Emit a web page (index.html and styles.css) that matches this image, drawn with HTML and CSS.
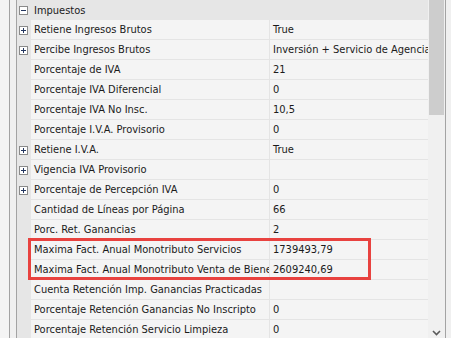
FILE: index.html
```html
<!DOCTYPE html>
<html lang="es">
<head>
    <meta charset="UTF-8">
    <title>Propiedades - Impuestos</title>
    <link rel="stylesheet" href="styles.css">
</head>
<body>

<div class="grid-frame">
    <div class="edge-left"></div>

    <div class="prop-grid">
        <div class="cat-row">
            <span class="toggle">
                <svg width="9" height="9" viewBox="0 0 9 9"><rect x="0.5" y="0.5" width="8" height="8" fill="#fff" stroke="#8a8a8a"/><path d="M2 4.5h5" stroke="#23355f"/></svg>
            </span>
            <span class="cat-name">Impuestos</span>
        </div>

        <div class="prop-row">
            <span class="toggle"><svg width="9" height="9" viewBox="0 0 9 9"><rect x="0.5" y="0.5" width="8" height="8" fill="#fff" stroke="#8a8a8a"/><path d="M2 4.5h5M4.5 2v5" stroke="#23355f"/></svg></span>
            <span class="prop-name">Retiene Ingresos Brutos</span>
            <span class="prop-value">True</span>
        </div>
        <div class="prop-row">
            <span class="toggle"><svg width="9" height="9" viewBox="0 0 9 9"><rect x="0.5" y="0.5" width="8" height="8" fill="#fff" stroke="#8a8a8a"/><path d="M2 4.5h5M4.5 2v5" stroke="#23355f"/></svg></span>
            <span class="prop-name">Percibe Ingresos Brutos</span>
            <span class="prop-value">Inversión + Servicio de Agencia</span>
        </div>
        <div class="prop-row">
            <span class="toggle"></span>
            <span class="prop-name">Porcentaje de IVA</span>
            <span class="prop-value">21</span>
        </div>
        <div class="prop-row">
            <span class="toggle"></span>
            <span class="prop-name">Porcentaje IVA Diferencial</span>
            <span class="prop-value">0</span>
        </div>
        <div class="prop-row">
            <span class="toggle"></span>
            <span class="prop-name">Porcentaje IVA No Insc.</span>
            <span class="prop-value">10,5</span>
        </div>
        <div class="prop-row">
            <span class="toggle"></span>
            <span class="prop-name">Porcentaje I.V.A. Provisorio</span>
            <span class="prop-value">0</span>
        </div>
        <div class="prop-row">
            <span class="toggle"><svg width="9" height="9" viewBox="0 0 9 9"><rect x="0.5" y="0.5" width="8" height="8" fill="#fff" stroke="#8a8a8a"/><path d="M2 4.5h5M4.5 2v5" stroke="#23355f"/></svg></span>
            <span class="prop-name">Retiene I.V.A.</span>
            <span class="prop-value">True</span>
        </div>
        <div class="prop-row">
            <span class="toggle"><svg width="9" height="9" viewBox="0 0 9 9"><rect x="0.5" y="0.5" width="8" height="8" fill="#fff" stroke="#8a8a8a"/><path d="M2 4.5h5M4.5 2v5" stroke="#23355f"/></svg></span>
            <span class="prop-name">Vigencia IVA Provisorio</span>
            <span class="prop-value"></span>
        </div>
        <div class="prop-row">
            <span class="toggle"><svg width="9" height="9" viewBox="0 0 9 9"><rect x="0.5" y="0.5" width="8" height="8" fill="#fff" stroke="#8a8a8a"/><path d="M2 4.5h5M4.5 2v5" stroke="#23355f"/></svg></span>
            <span class="prop-name">Porcentaje de Percepción IVA</span>
            <span class="prop-value">0</span>
        </div>
        <div class="prop-row">
            <span class="toggle"></span>
            <span class="prop-name">Cantidad de Líneas por Página</span>
            <span class="prop-value">66</span>
        </div>
        <div class="prop-row">
            <span class="toggle"></span>
            <span class="prop-name">Porc. Ret. Ganancias</span>
            <span class="prop-value">2</span>
        </div>
        <div class="prop-row">
            <span class="toggle"></span>
            <span class="prop-name">Maxima Fact. Anual Monotributo Servicios</span>
            <span class="prop-value">1739493,79</span>
        </div>
        <div class="prop-row">
            <span class="toggle"></span>
            <span class="prop-name">Maxima Fact. Anual Monotributo Venta de Bienes</span>
            <span class="prop-value">2609240,69</span>
        </div>
        <div class="prop-row">
            <span class="toggle"></span>
            <span class="prop-name">Cuenta Retención Imp. Ganancias Practicadas</span>
            <span class="prop-value"></span>
        </div>
        <div class="prop-row">
            <span class="toggle"></span>
            <span class="prop-name">Porcentaje Retención Ganancias No Inscripto</span>
            <span class="prop-value">0</span>
        </div>
        <div class="prop-row">
            <span class="toggle"></span>
            <span class="prop-name">Porcentaje Retención Servicio Limpieza</span>
            <span class="prop-value">0</span>
        </div>
    </div>

    <div class="scrollbar">
        <div class="scroll-thumb"></div>
        <svg class="scroll-down" width="9" height="6" viewBox="0 0 9 6"><path d="M1 1l3.5 3.5L8 1" fill="none" stroke="#5a5a5a" stroke-width="1.6"/></svg>
    </div>

    <div class="edge-right"></div>
</div>

<!-- Markierung der zwei Monotributo-Zeilen -->
<div class="highlight"></div>

</body>
</html>
```

FILE: styles.css
```css
body {
    margin: 0;
    background: #f4f4f4;
    font-family: 'DejaVu Sans', sans-serif;
    font-stretch: condensed;
    font-size: 11px;
    color: #1b1b1b;
}

.grid-frame {
    display: flex;
    height: 338px;
    overflow: hidden;
}

.edge-left {
    width: 6px;
    margin-left: 9px;
    background: #f0f0f0;
    border-left: 1px solid #a3a3a3;
    border-right: 1px solid #a3a3a3;
}

.prop-grid {
    width: 411px;
    background: #e6e6e6;
    border-right: 1px solid #f0f0f0;
}

.cat-row {
    display: flex;
    align-items: center;
    height: 20px;
}

.cat-name {
    padding-left: 3px;
}

.toggle {
    width: 14px;
    display: flex;
    justify-content: center;
    padding-right: 1px;
    box-sizing: border-box;
}

.prop-row {
    display: grid;
    grid-template-columns: 14px 239px 158px;
    height: 20px;
    align-items: stretch;
}

.prop-row .toggle {
    align-items: center;
}

.prop-name,
.prop-value {
    background: #f4f4f4;
    border-bottom: 1px solid #e4e4e4;
    line-height: 19px;
    white-space: nowrap;
    overflow: hidden;
}

.prop-name {
    padding-left: 3px;
    border-right: 1px solid #e4e4e4;
}

.prop-value {
    padding-left: 3px;
}

.scrollbar {
    width: 15px;
    padding-right: 1px;
    background: #f0f0f0;
    display: flex;
    flex-direction: column;
    justify-content: space-between;
}

.scroll-thumb {
    height: 115px;
    background: #cdcdcd;
}

.scroll-down {
    margin: 0 0 2px 3px;
}

.edge-right {
    flex: 1;
    background: #f0f0f0;
    border-left: 1px solid #a3a3a3;
}

.highlight {
    position: absolute;
    left: 28px;
    top: 238px;
    width: 343px;
    height: 42px;
    border: 3px solid #e8423f;
    box-sizing: border-box;
}
```
